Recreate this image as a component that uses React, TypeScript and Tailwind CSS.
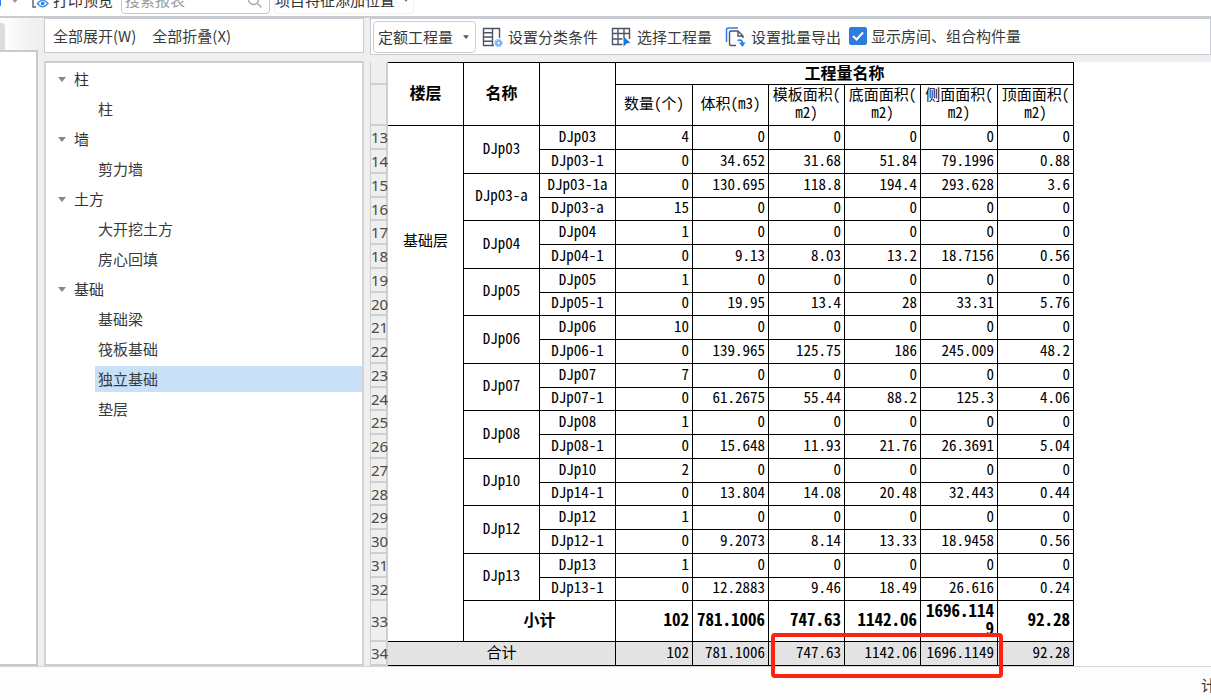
import { useState } from "react";
import clsx from "clsx";

const tree = [
  { name: "柱", children: ["柱"] },
  { name: "墙", children: ["剪力墙"] },
  { name: "土方", children: ["大开挖土方", "房心回填"] },
  { name: "基础", children: ["基础梁", "筏板基础", "独立基础", "垫层"] },
];

const groups = [
  { name: "DJp03", rows: [["DJp03", "4", "0", "0", "0", "0", "0"], ["DJp03-1", "0", "34.652", "31.68", "51.84", "79.1996", "0.88"]] },
  { name: "DJp03-a", rows: [["DJp03-1a", "0", "130.695", "118.8", "194.4", "293.628", "3.6"], ["DJp03-a", "15", "0", "0", "0", "0", "0"]] },
  { name: "DJp04", rows: [["DJp04", "1", "0", "0", "0", "0", "0"], ["DJp04-1", "0", "9.13", "8.03", "13.2", "18.7156", "0.56"]] },
  { name: "DJp05", rows: [["DJp05", "1", "0", "0", "0", "0", "0"], ["DJp05-1", "0", "19.95", "13.4", "28", "33.31", "5.76"]] },
  { name: "DJp06", rows: [["DJp06", "10", "0", "0", "0", "0", "0"], ["DJp06-1", "0", "139.965", "125.75", "186", "245.009", "48.2"]] },
  { name: "DJp07", rows: [["DJp07", "7", "0", "0", "0", "0", "0"], ["DJp07-1", "0", "61.2675", "55.44", "88.2", "125.3", "4.06"]] },
  { name: "DJp08", rows: [["DJp08", "1", "0", "0", "0", "0", "0"], ["DJp08-1", "0", "15.648", "11.93", "21.76", "26.3691", "5.04"]] },
  { name: "DJp10", rows: [["DJp10", "2", "0", "0", "0", "0", "0"], ["DJp14-1", "0", "13.804", "14.08", "20.48", "32.443", "0.44"]] },
  { name: "DJp12", rows: [["DJp12", "1", "0", "0", "0", "0", "0"], ["DJp12-1", "0", "9.2073", "8.14", "13.33", "18.9458", "0.56"]] },
  { name: "DJp13", rows: [["DJp13", "1", "0", "0", "0", "0", "0"], ["DJp13-1", "0", "12.2883", "9.46", "18.49", "26.616", "0.24"]] },
];

const totals = ["102", "781.1006", "747.63", "1142.06", "1696.1149", "92.28"];
const FIRST_ROW = 13;

const cell = "border-r border-b border-black px-0 pt-0 pb-1";
const gutter = "border-r-2 border-b-2 border-[#cfcfcf] bg-[#efefef] p-0 text-center font-['Noto_Sans'] text-[15px] leading-5 font-normal text-[#4a4a4a]";

function Caret({ className }: { className?: string }) {
  return (
    <svg viewBox="0 0 8 5" className={clsx("shrink-0", className)} fill="currentColor" aria-hidden="true">
      <path d="M0 0h8L4 5z" />
    </svg>
  );
}

function PreviewIcon() {
  return (
    <svg width="18" height="18" viewBox="0 0 18 18" fill="none" aria-hidden="true">
      <path d="M12 6V1H2v15h3" stroke="#5a6270" strokeWidth="1.4" />
      <path d="M6.500 12.500q5-6.500 10.500 0q-5.500 6.500-10.500 0z" stroke="#4b94f0" strokeWidth="1.5" />
      <circle cx="11.700" cy="12.500" r="1.800" fill="#2b7de9" />
    </svg>
  );
}

function ClassifyIcon() {
  return (
    <svg width="21" height="21" viewBox="0 0 21 21" fill="none" aria-hidden="true">
      <path d="M12 18.500H1.500v-17h16V11M10.500 1.500v17M1.500 5.800h9M1.500 10h9M1.500 14.200h9" stroke="#4c5566" strokeWidth="1.400" />
      <circle cx="16.500" cy="16" r="3" stroke="#8dbcf8" strokeWidth="2.400" strokeDasharray="1.800 .6" />
      <circle cx="16.500" cy="16" r="2" stroke="#6faaf5" strokeWidth="1.600" />
    </svg>
  );
}

function SelectIcon() {
  return (
    <svg width="21" height="21" viewBox="0 0 21 21" fill="none" aria-hidden="true">
      <path d="M11.500 17.500h-10v-16h17V12M1.500 6.500h17M1.500 12h10M7 1.500v16M13 1.500V11" stroke="#4c5566" strokeWidth="1.400" />
      <path d="M12.500 9.500l7 6.500-3.500.3-3.500 3.200z" fill="#1677ea" />
    </svg>
  );
}

function ExportIcon() {
  return (
    <svg width="21" height="21" viewBox="0 0 21 21" fill="none" aria-hidden="true">
      <path d="M1.500 15V3q0-2 2-2H13" stroke="#2b7de9" strokeWidth="1.500" />
      <path d="M11 18.500H6q-1.500 0-1.500-1.500V5.500Q4.500 4 6 4h7l5 5v2M13 4v5h5" stroke="#4c5566" strokeWidth="1.400" />
      <path d="M12.500 13.500q5-1.500 5 3" stroke="#2b7de9" strokeWidth="1.800" />
      <path d="M14 15.500h6.500L17.500 20z" fill="#2b7de9" />
    </svg>
  );
}

function TopBar() {
  return (
    <header className="flex h-[18px] items-end overflow-hidden border-b-2 border-[#c8cbd0] bg-white pb-[2px]">
      <span className="mb-2 h-6 w-px bg-[#2b7de9]" />
      <button type="button" aria-label="更多" className="mr-3 ml-[10px] flex h-7 items-center text-[#999]">
        <Caret className="h-[5px] w-2" />
      </button>
      <button type="button" className="flex h-7 items-center gap-1 text-[#333]">
        <PreviewIcon />
        <span>打印预览</span>
      </button>
      <label className="ml-2 flex h-7 w-[149px] shrink-0 items-center rounded border border-[#c3c7cc] px-[3px]">
        <input type="search" placeholder="搜索报表" aria-label="搜索报表" className="min-w-0 flex-1 placeholder:text-[#999]" />
        <svg width="15" height="15" viewBox="0 0 15 15" fill="none" stroke="#aaa" strokeWidth="1.400" className="mr-1" aria-hidden="true">
          <circle cx="6.500" cy="6.500" r="5" />
          <path d="M10.500 10.500l4 4" />
        </svg>
      </label>
      <button type="button" className="ml-1 flex h-7 items-center gap-2 rounded border border-[#f1f1f1] text-[#333]">
        项目特征添加位置
        <Caret className="mr-1 h-1 w-[6px] text-[#777]" />
      </button>
    </header>
  );
}

function ComponentTree() {
  const [active, setActive] = useState("独立基础");
  return (
    <section className="flex w-[320px] shrink-0 flex-col">
      <div className="flex h-[35px] items-center gap-4 border border-[#c8ccd2] bg-white px-2">
        <button type="button">全部展开(W)</button>
        <button type="button">全部折叠(X)</button>
      </div>
      <nav className="mt-2 flex-1 border-2 border-t-[#cfcfcf] border-r-[#d4d4d4] border-b-[#cfcfcf] border-l-[#d4d4d4] bg-white pt-px">
        <ul>
          {tree.map((group) => (
            <li key={group.name}>
              <button type="button" className="flex h-[30px] items-center gap-2 pl-3 text-[#333]">
                <Caret className="h-[5px] w-2 text-[#888]" />
                {group.name}
              </button>
              <ul>
                {group.children.map((name) => (
                  <li key={name} className="py-[2px] pl-[49px]">
                    <button
                      type="button"
                      onClick={() => setActive(name)}
                      className={clsx("flex h-[26px] w-full items-center pl-[3px]", active === name && "bg-[#c9e0f9]")}
                    >
                      {name}
                    </button>
                  </li>
                ))}
              </ul>
            </li>
          ))}
        </ul>
      </nav>
    </section>
  );
}

function ReportToolbar() {
  return (
    <div className="flex h-[37px] items-center border border-[#c8ccd2] bg-white pl-[2px] text-[#3a3a3a]">
      <label className="grid w-[103px] shrink-0 items-center rounded border border-[#cccfd3]">
        <select aria-label="工程量类型" className="h-[30px] appearance-none bg-transparent pl-1 [grid-area:1/1]">
          <option>定额工程量</option>
        </select>
        <Caret className="pointer-events-none mr-[6px] h-[4px] w-[6px] justify-self-end text-[#555] [grid-area:1/1]" />
      </label>
      <button type="button" className="ml-[6px] flex shrink-0 items-center gap-[5px] pt-px">
        <ClassifyIcon />
        设置分类条件
      </button>
      <button type="button" className="ml-[13px] flex shrink-0 items-center gap-[5px] pt-px">
        <SelectIcon />
        选择工程量
      </button>
      <button type="button" className="ml-[13px] flex shrink-0 items-center gap-[5px] pt-px">
        <ExportIcon />
        设置批量导出
      </button>
      <label className="ml-2 flex shrink-0 items-center gap-1 pb-[2px]">
        <span className="grid place-items-center">
          <input type="checkbox" defaultChecked className="peer size-[18px] appearance-none rounded-xs border border-[#9aa] bg-white [grid-area:1/1] checked:border-[#2b7ee0] checked:bg-[#2b7ee0]" />
          <svg viewBox="0 0 16 16" fill="none" stroke="white" strokeWidth="2" className="pointer-events-none invisible size-4 peer-checked:visible [grid-area:1/1]" aria-hidden="true">
            <path d="M3 8l3.500 3.500L13 4.500" />
          </svg>
        </span>
        显示房间、组合构件量
      </label>
    </div>
  );
}

function QuantityTable() {
  return (
    <table className="w-[703px] table-fixed border-separate border-spacing-0 font-['Noto_Sans_CJK_SC',sans-serif] text-[15px] leading-[18px] text-black [font-feature-settings:'hwid']">
      <colgroup>
        <col className="w-[17px]" />
        <col className="w-[76px]" />
        <col className="w-[76px]" />
        <col className="w-[76px]" />
        <col className="w-[77px]" />
        <col className="w-[76px]" />
        <col className="w-[76px]" />
        <col className="w-[76px]" />
        <col className="w-[77px]" />
        <col className="w-[76px]" />
      </colgroup>
      <thead>
        <tr className="h-[23px]">
          <td className={gutter} />
          <th rowSpan={2} className={clsx(cell, "border-t text-base leading-6")}>楼层</th>
          <th rowSpan={2} className={clsx(cell, "border-t text-base leading-6")}>名称</th>
          <th rowSpan={2} className={clsx(cell, "border-t")} />
          <th colSpan={6} className="border-t border-r border-b border-black px-0 pt-0 pb-[3px] text-base leading-[18px]">工程量名称</th>
        </tr>
        <tr className="h-[41px]">
          <td className={gutter} />
          <th className={clsx(cell, "font-normal")}>数量(个)</th>
          <th className={clsx(cell, "font-normal")}>体积(m3)</th>
          {["模板面积(", "底面面积(", "侧面面积(", "顶面面积("].map((title) => (
            <th key={title} className={clsx(cell, "font-normal whitespace-nowrap")}>
              <span className="block">{title}</span>
              <span className="block">m2)</span>
            </th>
          ))}
        </tr>
      </thead>
      <tbody>
        {groups.map((group, g) =>
          group.rows.map(([name, ...values], r) => (
            <tr key={name} className={g % 2 === 1 && r === 1 ? "h-[23px]" : "h-6"}>
              <th scope="row" className={gutter}>{FIRST_ROW + g * 2 + r}</th>
              {g === 0 && r === 0 && (
                <td rowSpan={21} className={clsx(cell, "pt-[105px] text-center align-top")}>基础层</td>
              )}
              {r === 0 && <td rowSpan={2} className={clsx(cell, "text-center")}>{group.name}</td>}
              <td className={clsx(cell, "text-center")}>{name}</td>
              {values.map((value, i) => (
                <td key={i} className={clsx(cell, "pr-[3px] text-right")}>{value}</td>
              ))}
            </tr>
          ))
        )}
        <tr className="h-[41px] font-bold">
          <th scope="row" className={gutter}>33</th>
          <td colSpan={2} className={clsx(cell, "text-center text-base")}>小计</td>
          {totals.map((value) => (
            <td key={value} className={clsx(cell, "pr-[3px] text-right text-[17px] break-all")}>{value}</td>
          ))}
        </tr>
      </tbody>
      <tfoot>
        <tr className="h-6 bg-[#e3e3e3]">
          <th scope="row" className={gutter}>34</th>
          <td colSpan={3} className={clsx(cell, "text-center")}>合计</td>
          {totals.map((value) => (
            <td key={value} className={clsx(cell, "pr-[3px] text-right")}>{value}</td>
          ))}
        </tr>
      </tfoot>
    </table>
  );
}

export default function App() {
  return (
    <div className="flex min-h-screen flex-col overflow-x-hidden bg-[#fdfdfd] font-['Noto_Sans_CJK_SC',sans-serif] text-[15px] leading-5 text-[#3a3a3a]">
      <TopBar />
      <main className="flex border-b border-[#d5d5d5] bg-[#efefef]">
        <aside className="flex w-[38px] shrink-0 flex-col">
          <div className="flex h-8 items-end bg-gradient-to-r from-white to-[#efefef]">
            <span className="h-[27px] w-[5px] rounded-tr bg-[#dcdcdc]" />
          </div>
          <div className="flex-1 border-t-2 border-r-2 border-b-2 border-[#c8cacc] bg-white" />
        </aside>
        <div className="w-[6px] shrink-0" />
        <ComponentTree />
        <div className="w-[6px] shrink-0" />
        <section className="min-w-0 flex-1">
          <ReportToolbar />
          <div className="relative mt-[7px] border-l border-[#cfcfcf] bg-white">
            <QuantityTable />
            {/* highlighted totals */}
            <div className="pointer-events-none absolute -bottom-3 left-[400px] h-[45px] w-[232px] rounded border-4 border-[#ff2113]" />
          </div>
        </section>
      </main>
      <footer className="flex justify-end pt-2">
        <span className="w-[10px] overflow-hidden whitespace-nowrap">计算</span>
      </footer>
    </div>
  );
}
